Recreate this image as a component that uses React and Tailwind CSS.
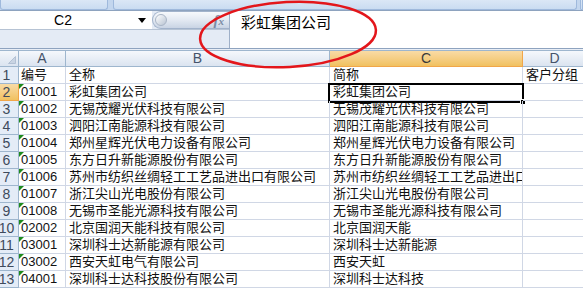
import React from "react";

const ROWS = [
  ["编号", "全称", "简称", "客户分组"],
  ["01001", "彩虹集团公司", "彩虹集团公司"],
  ["01002", "无锡茂耀光伏科技有限公司", "无锡茂耀光伏科技有限公司"],
  ["01003", "泗阳江南能源科技有限公司", "泗阳江南能源科技有限公司"],
  ["01004", "郑州星辉光伏电力设备有限公司", "郑州星辉光伏电力设备有限公司"],
  ["01005", "东方日升新能源股份有限公司", "东方日升新能源股份有限公司"],
  ["01006", "苏州市纺织丝绸轻工工艺品进出口有限公司", "苏州市纺织丝绸轻工工艺品进出口有限公司"],
  ["01007", "浙江尖山光电股份有限公司", "浙江尖山光电股份有限公司"],
  ["01008", "无锡市圣能光源科技有限公司", "无锡市圣能光源科技有限公司"],
  ["02002", "北京国润天能科技有限公司", "北京国润天能"],
  ["03001", "深圳科士达新能源有限公司", "深圳科士达新能源"],
  ["03002", "西安天虹电气有限公司", "西安天虹"],
  ["04001", "深圳科士达科技股份有限公司", "深圳科士达科技"],
];

const COLS = [
  { id: "A", w: "w-[47px]" },
  { id: "B", w: "w-[264px]" },
  { id: "C", w: "w-[193px]" },
  { id: "D", w: "w-[64px]" },
];

function Ribbon() {
  return (
    <div className="flex h-[10px] bg-[#c3d6ee]">
      <div className="w-[108px] shrink-0 rounded-b-[3px] border border-t-0 border-[#9fb9dc] bg-linear-to-b from-[#dbe7f6] to-[#cadcf1]" />
      <div className="w-[5px] shrink-0" />
      <div className="w-[464px] shrink-0 rounded-b-[3px] border border-t-0 border-[#9fb9dc] bg-linear-to-b from-[#dbe7f6] to-[#cadcf1]" />
      <div className="w-[3px] shrink-0" />
      <div className="flex-1 rounded-b-[3px] border border-t-0 border-[#9fb9dc] bg-linear-to-b from-[#dbe7f6] to-[#cadcf1]" />
    </div>
  );
}

function FormulaBar() {
  return (
    <div className="flex h-[39px] border-y border-[#8ea3bf]">
      <div className="flex w-[229px] shrink-0 flex-col bg-[#e4ebf5]">
        <div className="flex h-[19px] border-b border-[#b6c3d4]">
          <div className="flex w-[152px] shrink-0 items-center bg-white">
            <span className="w-[126px] text-center text-[14px] leading-[18px] text-black">C2</span>
            <svg width="8" height="5" viewBox="0 0 8 5" className="ml-[12px]">
              <path d="M0 0h8L4 5z" fill="#000" />
            </svg>
          </div>
          <div className="relative flex flex-1 items-center rounded-l-full border border-r-0 border-[#a2b3cb] bg-linear-to-b from-[#f7f9fc] via-[#e3e9f2] to-[#c9d4e4]">
            <div className="ml-[2px] h-[12px] w-[12px] rounded-full border border-[#a9b5c6] bg-linear-to-br from-[#ffffff] to-[#b9c4d3]" />
            <span className="ml-auto mr-[5px] font-['Liberation_Serif',serif] text-[15px] font-bold italic leading-[14px] text-[#7b8ca4]">
              f<span className="text-[11px]">x</span>
            </span>
          </div>
        </div>
      </div>
      <div className="flex-1 border-l border-[#9fb0c8] bg-white pl-[11px] pt-[2px] font-['Noto_Sans_CJK_SC',sans-serif] text-[15px] leading-[18px] text-black">
        彩虹集团公司
      </div>
    </div>
  );
}

function HeaderRow() {
  return (
    <div className="flex h-[17px] border-t border-[#9eb6ce]">
      <div className="relative w-[19px] shrink-0 border-r border-b border-[#9eb6ce] bg-linear-to-b from-[#f4f7fb] to-[#dbe4f0]">
        <svg width="8" height="8" viewBox="0 0 8 8" className="absolute right-[2px] bottom-[2px]">
          <path d="M7.5 0.5V7.5H0.5z" fill="#c9d4e3" stroke="#b3c1d4" strokeWidth="1" />
        </svg>
      </div>
      {COLS.map((c) => (
        <div
          key={c.id}
          className={`${c.w} shrink-0 border-r border-b text-center text-[14px] leading-[15px] ${
            c.id === "C"
              ? "border-[#f1a649] bg-linear-to-b from-[#f9dba5] to-[#f1c15f] text-[#3a3a3a]"
              : "border-[#9eb6ce] bg-linear-to-b from-[#f5f8fc] to-[#dbe4f0] text-[#45536a]"
          }`}
        >
          {c.id}
        </div>
      ))}
    </div>
  );
}

function DataRow({ n, cells }) {
  const sel = n === 2;
  return (
    <div className="flex h-[17px]">
      <div
        className={`w-[19px] shrink-0 overflow-hidden border-r border-b ${
          sel ? "border-[#f1a649] bg-linear-to-b from-[#f9dba5] to-[#f1c15f]" : "border-[#9eb6ce] bg-[#e4ecf7]"
        }`}
      >
        <div className="-ml-[6px] w-[25px] text-center text-[14px] leading-[16px] text-[#3e4a5c]">{n}</div>
      </div>
      {COLS.map((c, i) => (
        <div
          key={c.id}
          className={`relative ${c.w} shrink-0 border-r border-b border-[#d0d7e5] ${
            c.id === "A" ? "pl-[2px]" : "pl-[3px]"
          }`}
        >
          {c.id === "A" && n > 1 && (
            <svg width="5" height="5" viewBox="0 0 5 5" className="absolute left-0 top-0">
              <path d="M0 0h5L0 5z" fill="#1d8a1d" />
            </svg>
          )}
          <div className="overflow-hidden whitespace-nowrap text-[13px] leading-[16px] text-[#111]">
            {cells[i] || ""}
          </div>
          {sel && c.id === "C" && (
            <div className="absolute -left-[2px] -top-[1px] h-[20px] w-[196px] border-2 border-black">
              <div className="absolute -right-[4px] -bottom-[4px] h-[6px] w-[6px] border border-white bg-black" />
            </div>
          )}
        </div>
      ))}
    </div>
  );
}

export default function App() {
  return (
    <div className="relative h-[291px] w-[583px] overflow-hidden bg-white font-['Liberation_Sans','Noto_Sans_CJK_SC',sans-serif]">
      <Ribbon />
      <FormulaBar />
      <div className="h-[1px] bg-[#e9eef6]" />
      <HeaderRow />
      {ROWS.map((r, i) => (
        <DataRow key={i} n={i + 1} cells={r} />
      ))}
      <svg width="583" height="291" className="pointer-events-none absolute left-0 top-0">
        <ellipse
          cx="288"
          cy="34.5"
          rx="88"
          ry="32.5"
          transform="rotate(-3 288 34.5)"
          fill="none"
          stroke="#e3161b"
          strokeWidth="2.5"
        />
      </svg>
    </div>
  );
}
